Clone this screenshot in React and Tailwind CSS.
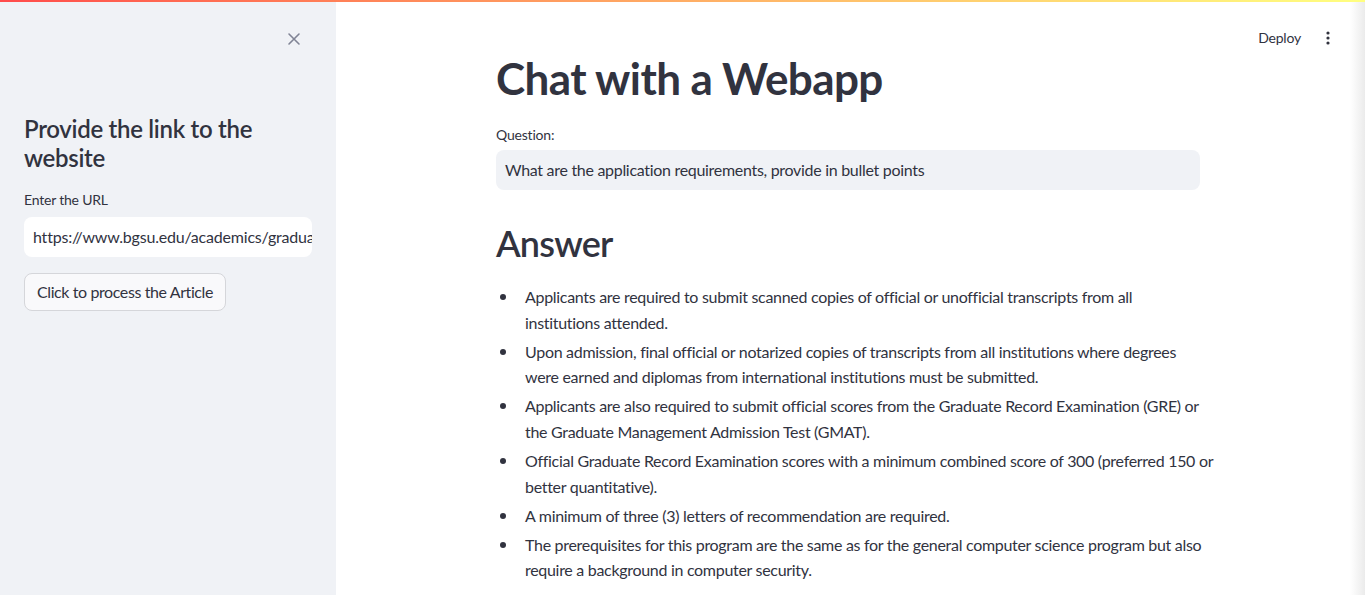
import React from "react";

const items = [
  ["Applicants are required to submit scanned copies of official or unofficial transcripts from all", "institutions attended."],
  ["Upon admission, final official or notarized copies of transcripts from all institutions where degrees", "were earned and diplomas from international institutions must be submitted."],
  ["Applicants are also required to submit official scores from the Graduate Record Examination (GRE) or", "the Graduate Management Admission Test (GMAT)."],
  ["Official Graduate Record Examination scores with a minimum combined score of 300 (preferred 150 or", "better quantitative)."],
  ["A minimum of three (3) letters of recommendation are required."],
  ["The prerequisites for this program are the same as for the general computer science program but also", "require a background in computer security."],
];

export default function App() {
  return (
    <div
      className="relative h-[595px] w-[1365px] overflow-hidden bg-white text-[#31333f]"
      style={{ fontFamily: "Lato, 'Noto Sans', sans-serif" }}
    >
      <div className="absolute left-0 right-0 top-0 z-10 h-[2px] bg-gradient-to-r from-[#ff4b4b] to-[#ffff80]" />
      <div className="flex h-full">
        <aside className="flex w-[336px] shrink-0 flex-col bg-[#f0f2f6] px-6">
          <div className="flex justify-end pr-[10px] pt-[31px]">
            <svg width="16" height="16" viewBox="0 0 16 16" className="text-[#808495]">
              <path d="M3 3L13 13M13 3L3 13" stroke="currentColor" strokeWidth="1.6" strokeLinecap="round" />
            </svg>
          </div>
          <h2 className="mt-[67px] text-[24px] font-semibold leading-[29px] tracking-[-0.3px]">
            Provide the link to the website
          </h2>
          <label className="mt-[18px] text-[14px] leading-[20px] tracking-[-0.2px]">Enter the URL</label>
          <div className="mt-[7px] flex h-[40px] w-[288px] items-center overflow-hidden rounded-lg bg-white px-[9px] text-[16px] tracking-[-0.2px] whitespace-nowrap">
            https://www.bgsu.edu/academics/graduate
          </div>
          <button className="mt-[16px] h-[38px] w-fit rounded-lg border border-[#d5d6da] bg-[#f9f9fb] px-3 text-[16px] tracking-[-0.4px]">
            Click to process the Article
          </button>
        </aside>
        <main className="relative flex-1">
          <div className="absolute right-[35px] top-[27px] flex items-center gap-[25px] text-[14px] tracking-[-0.2px]">
            <span>Deploy</span>
            <svg width="4" height="14" viewBox="0 0 4 14" className="text-[#31333f]">
              <circle cx="2" cy="2" r="1.6" fill="currentColor" />
              <circle cx="2" cy="7" r="1.6" fill="currentColor" />
              <circle cx="2" cy="12" r="1.6" fill="currentColor" />
            </svg>
          </div>
          <div className="ml-[160px] w-[704px] pt-[52px]">
            <h1 className="text-[44px] font-bold leading-[52px] tracking-[-0.6px]">Chat with a Webapp</h1>
            <div className="mt-[21px] text-[14px] leading-[20px] tracking-[-0.2px]">Question:</div>
            <div className="mt-[5px] flex h-[40px] items-center rounded-lg bg-[#f0f2f6] px-[9px] text-[16px] tracking-[-0.3px]">
              What are the application requirements, provide in bullet points
            </div>
            <h2 className="mt-[31px] text-[36px] font-semibold leading-[44px] tracking-[-0.8px]">Answer</h2>
            <ul className="mt-[19px] text-[16px] leading-[25.6px] tracking-[-0.3px]">
              {items.map((lines, i) => (
                <li key={i} className="relative mb-[3.5px] pl-[29px]">
                  <span className="absolute left-[4px] top-[10px] h-[6px] w-[6px] rounded-full bg-[#31333f]" />
                  {lines.map((l, j) => (
                    <span key={j} className="block whitespace-nowrap">
                      {l}
                    </span>
                  ))}
                </li>
              ))}
            </ul>
          </div>
          <div className="absolute bottom-0 right-0 top-0 w-[15px] bg-gradient-to-r from-white to-[#ebebeb]" />
        </main>
      </div>
    </div>
  );
}
